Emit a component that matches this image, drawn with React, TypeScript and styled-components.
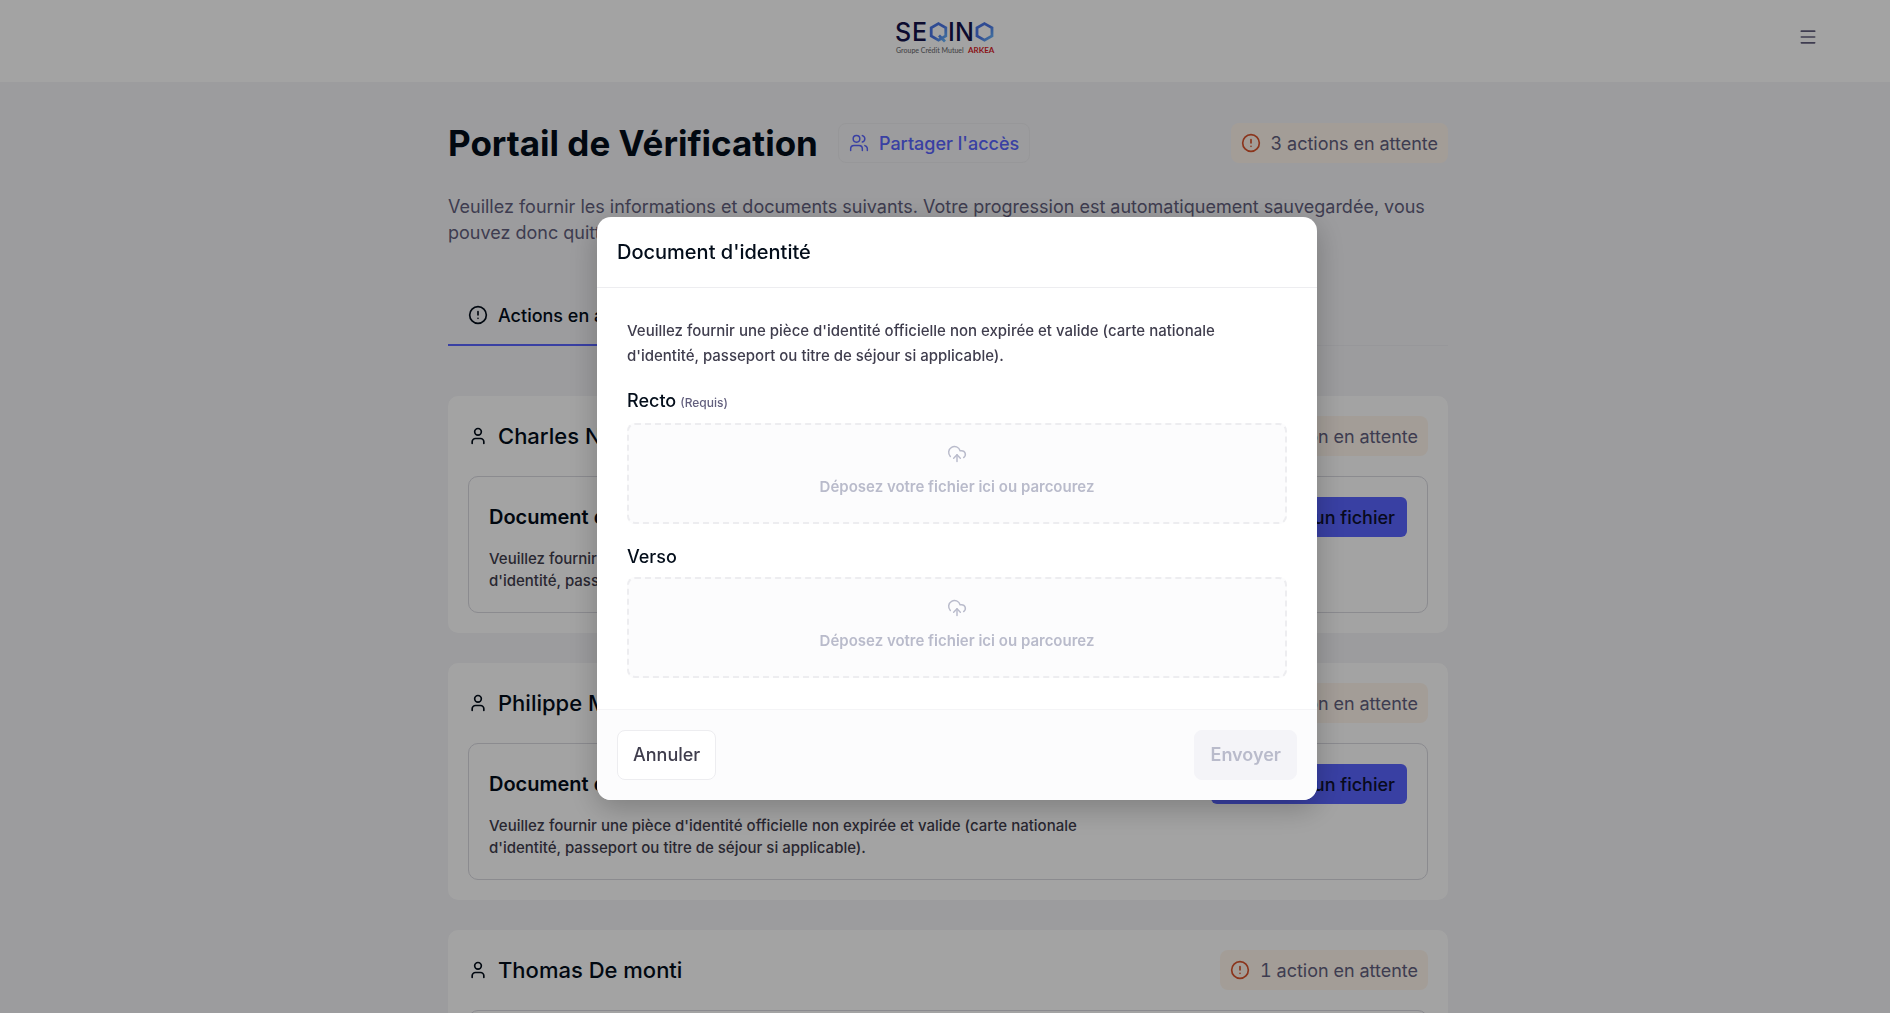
import React from "react";
import styled, { createGlobalStyle } from "styled-components";
import { CircleAlert, CloudUpload, Menu, Plus, User, Users } from "lucide-react";

const color = {
  ink: "#030d1a",
  body: "#3f3d4d",
  muted: "#625f7d",
  faint: "#b9bbcb",
  line: "#ededf0",
  primary: "#5964ff",
  warning: "#d9532c",
};

const GlobalStyle = createGlobalStyle`
  *, *::before, *::after { box-sizing: border-box; }
  body {
    margin: 0;
    height: 100vh;
    overflow: hidden;
    background: #f4f4f7;
    color: ${color.ink};
    font-family: Inter, "Liberation Sans", sans-serif;
    font-size: 18px;
    font-weight: 450;
  }
  h1, h2, h3, p { margin: 0; }
  button { font: inherit; cursor: pointer; }
`;

const TopBar = styled.header`
  display: grid;
  grid-template-columns: 1fr auto 1fr;
  height: 82px;
  padding: 20px 72px 0;
  background: #ffffff;
`;

const LogoLink = styled.a`
  grid-column: 2;
  display: block;
  height: 40px;
`;

const LogoDrawing = styled.svg`
  display: block;
  overflow: visible;
`;

const MenuButton = styled.button`
  justify-self: end;
  align-self: start;
  display: flex;
  margin-top: 7px;
  padding: 0;
  border: 0;
  background: none;
  color: ${color.muted};
`;

const Main = styled.main`
  display: flex;
  justify-content: center;
  padding: 41px 0 40px 6px;
`;

const Content = styled.div`
  width: 1000px;
  max-width: 100%;
`;

const TitleRow = styled.div`
  display: flex;
  align-items: center;
  gap: 20px;
`;

const PageTitle = styled.h1`
  font-size: 35px;
  line-height: 40px;
  font-weight: 700;
`;

const ShareButton = styled.button`
  display: flex;
  align-items: center;
  gap: 10px;
  height: 40px;
  padding: 0 10px;
  border: 1px solid ${color.line};
  border-radius: 8px;
  background: transparent;
  color: ${color.primary};
`;

const Badge = styled.span`
  display: flex;
  align-items: center;
  gap: 10px;
  height: 40px;
  margin-left: auto;
  padding: 0 10px;
  border-radius: 8px;
  background: #fff6ed;
  color: ${color.muted};
  font-weight: 400;
  font-variant-numeric: tabular-nums;

  svg { color: ${color.warning}; }
`;

const Intro = styled.p`
  margin-top: 31px;
  line-height: 26px;
  font-weight: 400;
  color: ${color.muted};
`;

const Tabs = styled.div`
  display: flex;
  margin: 40px 0 50px;
  border-bottom: 1px solid #ececf1;
`;

const Tab = styled.button`
  display: flex;
  align-items: center;
  gap: 10px;
  height: 60px;
  margin-bottom: -1px;
  padding: 0 20px;
  border: 0;
  border-bottom: 2px solid ${color.primary};
  background: none;
  color: ${color.ink};
`;

const CardList = styled.div`
  display: grid;
  gap: 30px;
`;

const Card = styled.section`
  display: grid;
  gap: 20px;
  padding: 20px;
  border-radius: 10px;
  background: #ffffff;
`;

const CardHeader = styled.div`
  display: flex;
  align-items: center;
  gap: 10px;
`;

const PersonName = styled.h2`
  font-size: 22px;
  line-height: 30px;
  font-weight: 500;
`;

const Task = styled.article`
  display: flex;
  justify-content: space-between;
  align-items: flex-start;
  padding: 20px;
  border: 1px solid #d9d9e0;
  border-radius: 10px;
`;

const TaskText = styled.div`
  max-width: 600px;
`;

const TaskTitle = styled.h3`
  margin-bottom: 11px;
  font-size: 20px;
  line-height: 40px;
  font-weight: 600;
`;

const TaskDescription = styled.p`
  font-size: 15px;
  line-height: 22px;
  font-weight: 500;
  color: ${color.body};
`;

const PrimaryButton = styled.button`
  display: flex;
  align-items: center;
  gap: 8px;
  height: 40px;
  padding: 0 12px;
  border: 0;
  border-radius: 6px;
  background: ${color.primary};
  color: #0d1030;
`;

const Overlay = styled.div`
  position: fixed;
  inset: 0;
  display: flex;
  align-items: center;
  justify-content: center;
  padding: 3px 0 0 24px;
  background: rgba(0, 0, 0, 0.36);
`;

const Dialog = styled.form`
  width: 720px;
  max-width: 100%;
  border-radius: 14px;
  overflow: hidden;
  background: #ffffff;
  box-shadow: 0 8px 30px rgba(0, 0, 0, 0.24);
`;

const DialogHeader = styled.div`
  padding: 20px;
  border-bottom: 1px solid ${color.line};
`;

const DialogTitle = styled.h2`
  font-size: 20px;
  line-height: 30px;
  font-weight: 500;
`;

const DialogBody = styled.div`
  display: grid;
  gap: 20px;
  padding: 30px 30px 31px;
`;

const DialogText = styled.p`
  max-width: 600px;
  font-size: 15px;
  line-height: 25px;
  font-weight: 500;
  color: ${color.body};
`;

const Field = styled.div`
  display: grid;
  gap: 8px;
`;

const FieldLabel = styled.label`
  display: flex;
  align-items: baseline;
  gap: 4px;
  line-height: 25px;
`;

const Required = styled.span`
  font-size: 12px;
  font-weight: 500;
  color: ${color.muted};
`;

const DropZone = styled.label`
  display: flex;
  flex-direction: column;
  align-items: center;
  gap: 10px;
  padding: 19px 20px 23px;
  border: 2px dashed ${color.line};
  border-radius: 8px;
  background: #fcfcfd;
  color: ${color.faint};
  font-size: 15px;
  line-height: 25px;
  font-weight: 600;
  cursor: pointer;
`;

const FileInput = styled.input`
  position: absolute;
  width: 1px;
  height: 1px;
  opacity: 0;
`;

const DialogFooter = styled.div`
  display: flex;
  justify-content: space-between;
  padding: 20px;
  border-top: 1px solid #f4f4f6;
  background: #fcfcfd;
`;

const FooterButton = styled.button<{ $muted?: boolean }>`
  height: 50px;
  padding: 0 15px;
  border: 1px solid ${(p) => (p.$muted ? "#f4f4f8" : color.line)};
  border-radius: 8px;
  background: ${(p) => (p.$muted ? "#f4f4f8" : "#ffffff")};
  color: ${(p) => (p.$muted ? color.faint : color.body)};
  font-weight: ${(p) => (p.$muted ? 600 : 450)};
`;

const description =
  "Veuillez fournir une pièce d'identité officielle non expirée et valide (carte nationale d'identité, passeport ou titre de séjour si applicable).";

const people = ["Charles Nolan", "Philippe Martin", "Thomas De monti"];

function Logo() {
  return (
    <LogoDrawing width="100" height="36" viewBox="0 0 100 36" role="img" aria-label="Seqino">
      <defs>
        <linearGradient id="hexBlue" x1="0" y1="0" x2="1" y2="1">
          <stop offset="0" stopColor="#4a78e8" />
          <stop offset="0.5" stopColor="#4a74e4" />
          <stop offset="1" stopColor="#6cbcff" />
        </linearGradient>
      </defs>
      <g fill="#14124a" fontFamily="Inter, sans-serif" fontSize="25" fontWeight="500">
        <text x="0" y="21">S</text>
        <text x="17" y="21">E</text>
        <text x="53" y="21">I</text>
        <text x="60" y="21">N</text>
      </g>
      <g fill="none" stroke="url(#hexBlue)" strokeWidth="2.8" strokeLinejoin="miter">
        <path d="M43.5 3.6 L50.8 7.8 V16 L43.5 20.2 L36.2 16 V7.8 Z M44 15.5 L50 21.4" />
        <path d="M89.5 3.6 L97 7.8 V16 L89.5 20.2 L82 16 V7.8 Z" />
      </g>
      <g fontFamily="Lato, sans-serif">
        <text x="1" y="33" fontSize="7" fill="#6c6c70">Groupe Crédit Mutuel</text>
        <text x="73" y="33" fontSize="8" fill="#d8232a" fontWeight="700">ARKEA</text>
      </g>
    </LogoDrawing>
  );
}

function UploadField({ id, label, required }: { id: string; label: string; required?: boolean }) {
  return (
    <Field>
      <FieldLabel htmlFor={id}>
        {label}
        {required && <Required>(Requis)</Required>}
      </FieldLabel>
      <DropZone>
        <CloudUpload size={20} strokeWidth={1.75} />
        Déposez votre fichier ici ou parcourez
        <FileInput id={id} type="file" />
      </DropZone>
    </Field>
  );
}

export default function App() {
  return (
    <>
      <GlobalStyle />
      <TopBar>
        <LogoLink href="#">
          <Logo />
        </LogoLink>
        <MenuButton aria-label="Menu">
          <Menu size={20} />
        </MenuButton>
      </TopBar>

      <Main>
        <Content>
          <TitleRow>
            <PageTitle>Portail de Vérification</PageTitle>
            <ShareButton>
              <Users size={20} strokeWidth={1.75} />
              Partager l'accès
            </ShareButton>
            <Badge>
              <CircleAlert size={20} />3 actions en attente
            </Badge>
          </TitleRow>
          <Intro>
            Veuillez fournir les informations et documents suivants. Votre progression est automatiquement
            sauvegardée, vous pouvez donc quitter cette page et y revenir plus tard.
          </Intro>

          <Tabs role="tablist">
            <Tab role="tab" aria-selected="true">
              <CircleAlert size={20} />
              Actions en attente
            </Tab>
          </Tabs>

          <CardList>
            {people.map((name) => (
              <Card key={name}>
                <CardHeader>
                  <User size={20} />
                  <PersonName>{name}</PersonName>
                  <Badge>
                    <CircleAlert size={20} />1 action en attente
                  </Badge>
                </CardHeader>
                <Task>
                  <TaskText>
                    <TaskTitle>Document d'identité</TaskTitle>
                    <TaskDescription>{description}</TaskDescription>
                  </TaskText>
                  <PrimaryButton>
                    <Plus size={16} />
                    Ajouter un fichier
                  </PrimaryButton>
                </Task>
              </Card>
            ))}
          </CardList>
        </Content>
      </Main>

      <Overlay>
        <Dialog role="dialog" aria-modal="true" aria-labelledby="dialog-title">
          <DialogHeader>
            <DialogTitle id="dialog-title">Document d'identité</DialogTitle>
          </DialogHeader>
          <DialogBody>
            <DialogText>{description}</DialogText>
            <UploadField id="recto" label="Recto" required />
            <UploadField id="verso" label="Verso" />
          </DialogBody>
          <DialogFooter>
            <FooterButton type="button">Annuler</FooterButton>
            <FooterButton type="submit" disabled $muted>
              Envoyer
            </FooterButton>
          </DialogFooter>
        </Dialog>
      </Overlay>
    </>
  );
}
